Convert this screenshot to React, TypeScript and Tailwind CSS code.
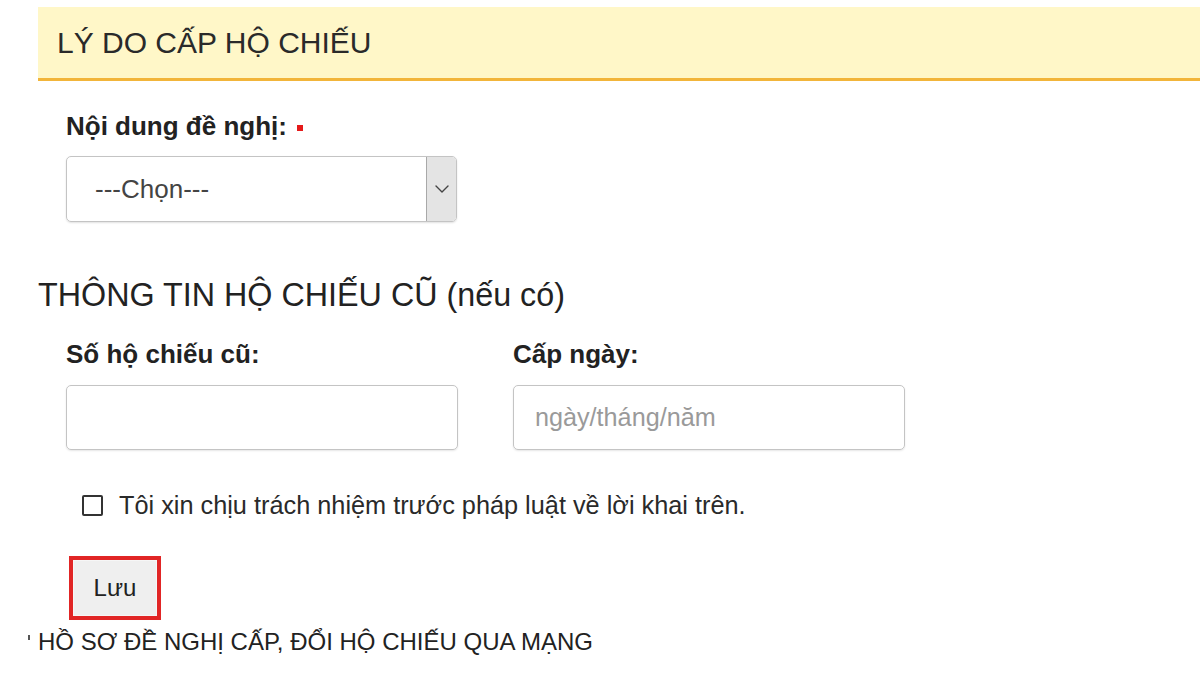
import { ChevronDown } from 'lucide-react'

export default function App() {
  return (
    <div className="w-[1200px] h-[675px] overflow-hidden bg-white pt-[7px] pl-[38px] font-['Liberation_Sans',Arial,sans-serif] text-[#222]">
      {/* tiêu đề vàng */}
      <div className="h-[74px] flex items-center pl-[19px] bg-[#fff7c8] border-b-[3px] border-[#f2b53a]">
        <h2 className="text-[30px] leading-[36px] text-[#2a2a2a]">LÝ DO CẤP HỘ CHIẾU</h2>
      </div>

      <div className="ml-[28px] mt-[30px]">
        <label className="flex items-center text-[26px] leading-[30px] font-bold">
          Nội dung đề nghị:
          <span className="ml-[10px] mt-[4px] w-[6px] h-[6px] bg-[#e51a1a]" />
        </label>
        <div className="mt-[15px] w-[391px] h-[66px] flex rounded-[5px] border border-[#c4c4c4] shadow-[0_1px_2px_rgba(0,0,0,0.12)] overflow-hidden">
          <div className="flex-1 flex items-center pl-[28px] text-[26px] text-[#444]">---Chọn---</div>
          <div className="w-[30px] flex items-center justify-center bg-[#e4e4e4] border-l border-[#a9a9a9]">
            <ChevronDown size={24} strokeWidth={1.4} color="#444" />
          </div>
        </div>
      </div>

      <h3 className="mt-[55px] text-[32.3px] leading-[36px] text-[#222]">THÔNG TIN HỘ CHIẾU CŨ (nếu có)</h3>

      <div className="ml-[28px] mt-[26px] flex gap-[55px]">
        <div className="w-[392px]">
          <label className="block text-[26px] leading-[30px] font-bold">Số hộ chiếu cũ:</label>
          <div className="mt-[16px] h-[65px] rounded-[5px] border border-[#c4c4c4] shadow-[0_1px_2px_rgba(0,0,0,0.1)]" />
        </div>
        <div className="w-[392px]">
          <label className="block text-[26px] leading-[30px] font-bold">Cấp ngày:</label>
          <div className="mt-[16px] h-[65px] flex items-center pl-[21px] rounded-[5px] border border-[#c4c4c4] shadow-[0_1px_2px_rgba(0,0,0,0.1)] text-[25.2px] text-[#9a9a9a]">
            ngày/tháng/năm
          </div>
        </div>
      </div>

      <div className="ml-[44px] mt-[41px] flex items-center h-[28px]">
        <span className="w-[21px] h-[21px] rounded-[2px] border-2 border-[#333]" />
        <span className="ml-[16px] text-[25.3px] leading-[28px] text-[#2a2a2a]">
          Tôi xin chịu trách nhiệm trước pháp luật về lời khai trên.
        </span>
      </div>

      <div className="ml-[31px] mt-[37px] w-[92px] h-[64px] border-4 border-[#e12525]">
        <button className="w-full h-full bg-[#efefef] border border-[#f6f6f6] text-[24px] text-[#222]">Lưu</button>
      </div>

      <div className="mt-[8px] -ml-[10px] flex items-center h-[28px] text-[24px] leading-[28px] text-[#222]">
        <span className="w-[2px] h-[5px] bg-[#555] mb-[10px] mr-[8px]" />
        HỒ SƠ ĐỀ NGHỊ CẤP, ĐỔI HỘ CHIẾU QUA MẠNG
      </div>
    </div>
  )
}
